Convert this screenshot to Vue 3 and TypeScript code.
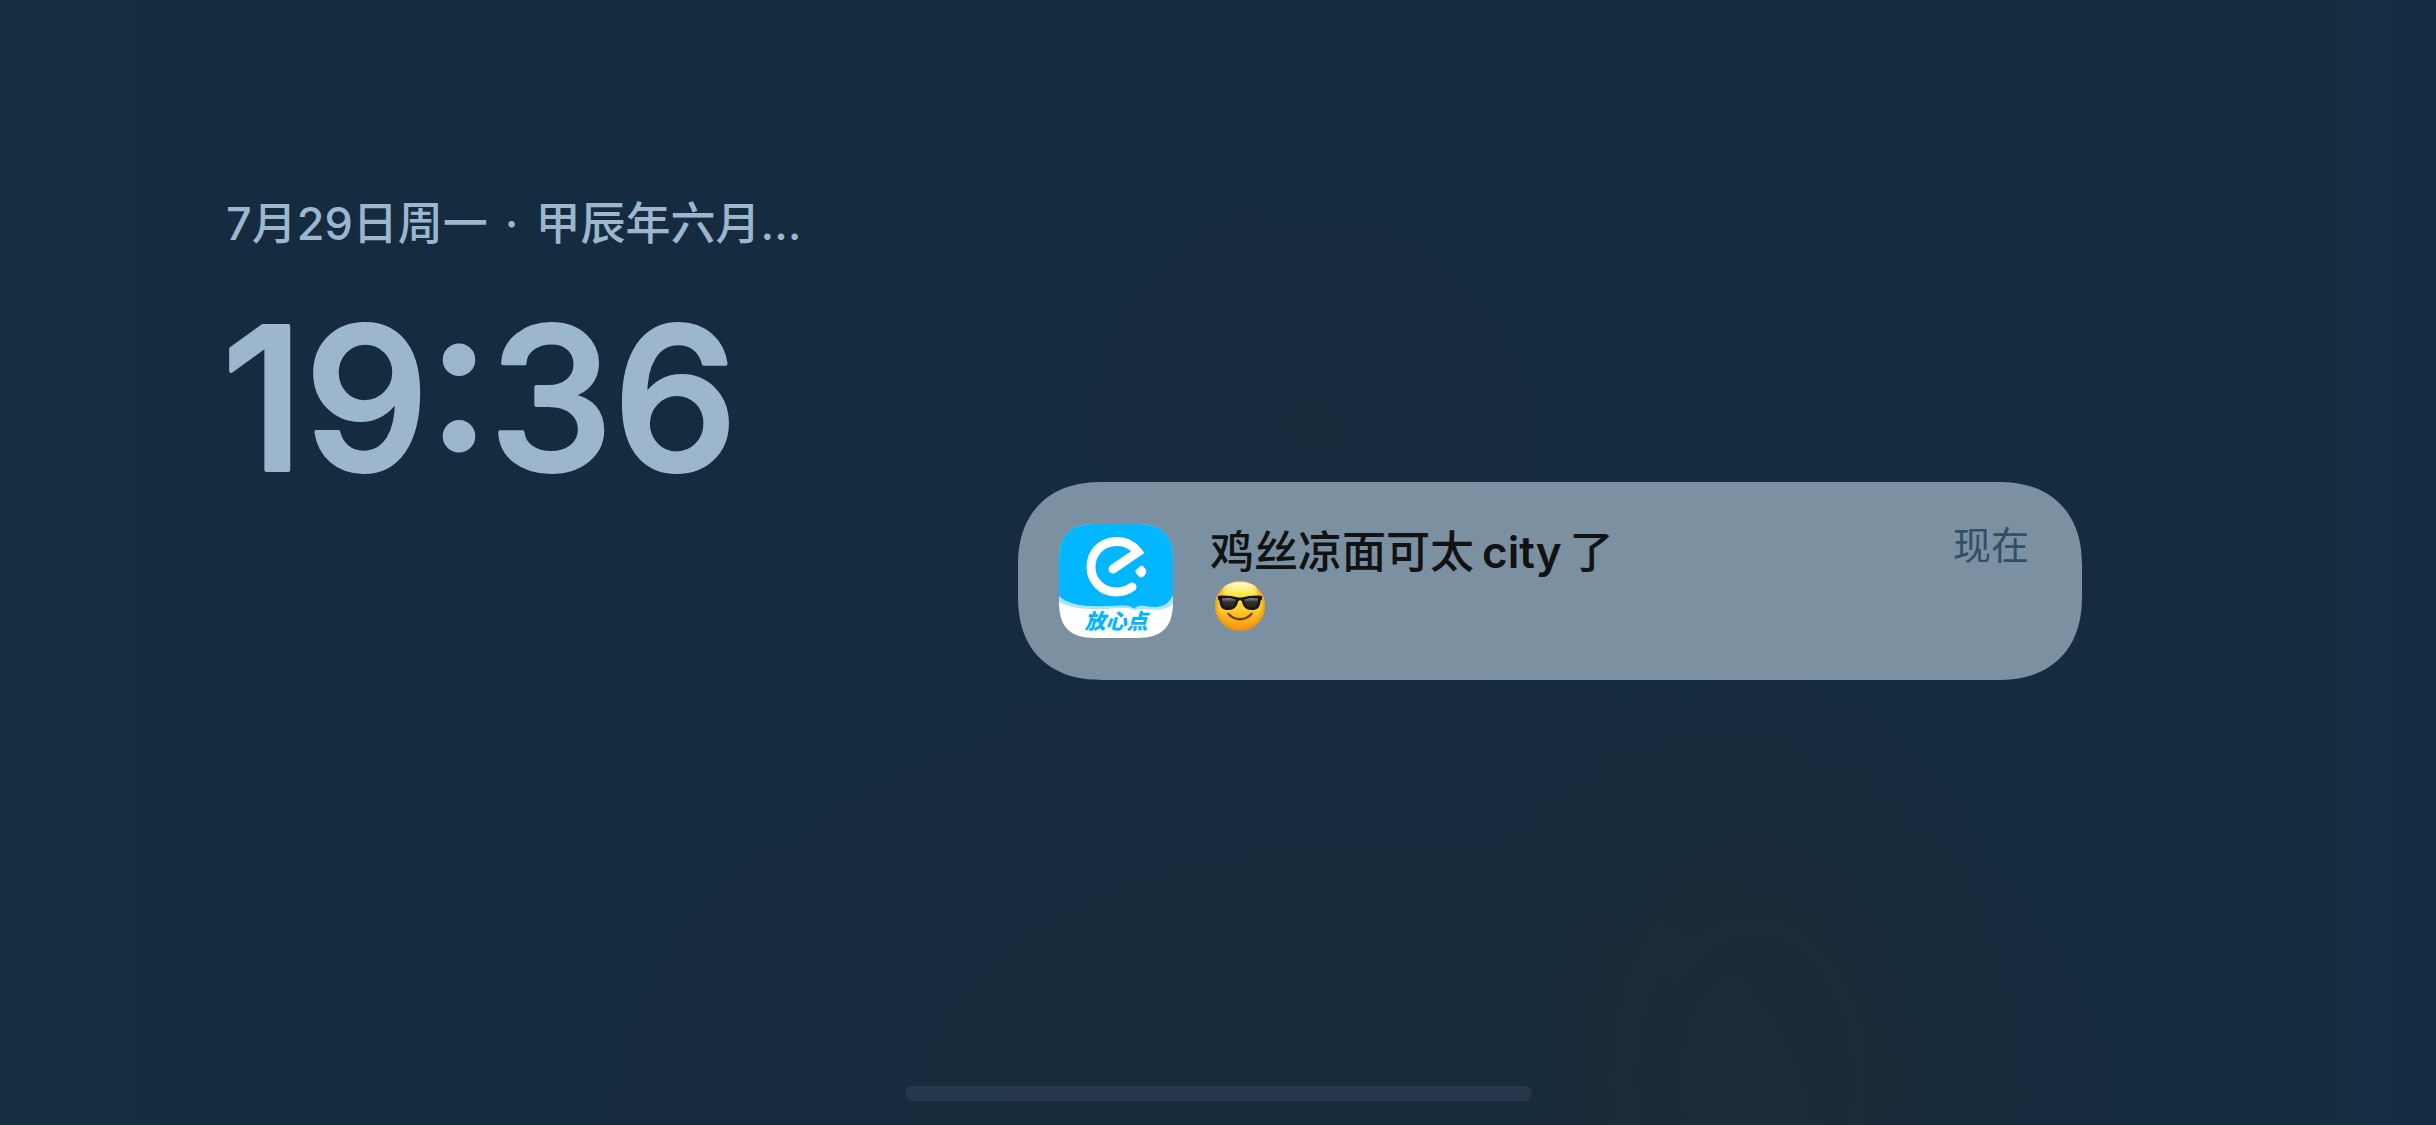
<script setup lang="ts">
interface Notice {
  app: string
  before: string
  latin: string
  after: string
  when: string
}

const solar = '7月29日周一'
const lunar = '甲辰年六月…'
const time = '19:36'
const notice: Notice = {
  app: '放心点',
  before: '鸡丝凉面可太',
  latin: 'city',
  after: '了',
  when: '现在',
}
</script>

<template>
  <main class="lock">
    <div class="content">
      <section class="clock">
        <p class="date">{{ solar }} <span class="dot">·</span> {{ lunar }}</p>
        <svg class="time" viewBox="0 0 520 176" role="img" :aria-label="time">
          <text x="-4" y="158">{{ time }}</text>
        </svg>
      </section>

      <section class="feed">
        <article class="card">
          <svg class="app" viewBox="0 0 114 114" aria-hidden="true">
            <defs>
              <clipPath id="app-mask">
                <path d="M36 0H78C103 0 114 11 114 36V78C114 103 103 114 78 114H36C11 114 0 103 0 78V36C0 11 11 0 36 0Z" />
              </clipPath>
            </defs>
            <g clip-path="url(#app-mask)">
              <rect y="60" width="114" height="54" fill="#fff" />
              <path d="M0 0H114V80C106 87 96 86 84 85C80 85 78 87 75 86C70 83 60 84 48 85C28 86 10 84 0 78Z" fill="#a9e5ff" />
              <path d="M0 0H114V71C110 80 103 83 96 83C90 83 86 81 80 82C76 83 76 85 74 84C69 80 60 82 48 82C26 83 9 81 0 72Z" fill="#02b6ff" />
              <path d="M54 45L79 28C73 20 66 17.500 58 17.500C42 17.500 32 29 32 43C32 57 43 68 57 68C64 68 69 66 73 63" fill="none" stroke="#fff" stroke-width="9" stroke-linecap="round" stroke-linejoin="miter" />
              <path d="M82 42Q84 42 85.500 44Q87.500 47 86.500 49Q85 53 82 53Q80 53 78.500 50.500L76.500 47Z" fill="#fff" stroke="#fff" stroke-width="1" stroke-linejoin="round" />
            </g>
            <text x="57" y="105">{{ notice.app }}</text>
          </svg>
          <h1 class="title">
            {{ notice.before }}<span class="latin">{{ notice.latin }}</span>{{ notice.after }}<br />
            <svg class="emoji" viewBox="0 0 50 50" role="img" aria-label="😎">
              <defs>
                <linearGradient id="face" x1="0" y1="0" x2="0" y2="1">
                  <stop offset="0" stop-color="#fff04a" />
                  <stop offset="0.5" stop-color="#ffd335" />
                  <stop offset="1" stop-color="#f8930f" />
                </linearGradient>
                <radialGradient id="rim">
                  <stop offset="0.780" stop-color="#f09a12" stop-opacity="0" />
                  <stop offset="1" stop-color="#e88a10" stop-opacity="0.800" />
                </radialGradient>
                <linearGradient id="shine" x1="0" y1="0" x2="0" y2="1">
                  <stop offset="0" stop-color="#fffff0" />
                  <stop offset="1" stop-color="#fff25a" stop-opacity="0" />
                </linearGradient>
                <linearGradient id="lens" x1="0" y1="0" x2="0" y2="1">
                  <stop offset="0" stop-color="#8a8a8a" />
                  <stop offset="0.400" stop-color="#303030" />
                  <stop offset="1" stop-color="#202020" />
                </linearGradient>
              </defs>
              <circle cx="25" cy="25" r="25" fill="url(#face)" />
              <circle cx="25" cy="25" r="25" fill="url(#rim)" />
              <ellipse cx="25" cy="9" rx="17" ry="8" fill="url(#shine)" />
              <path d="M3 15C10 14 17 15 23 16.500H27C33 15 40 14 47 15V18L45.500 20C45 27 42 29 37 29C31 29 28 26 27 20.500Q25 18 23 20.500C22 26 19 29 13 29C8 29 5 27 4.500 20L3 18Z" fill="#141414" />
              <path d="M7 17.500C12 16.500 17 17 21 18.500C20 25 18 27 13 27C9 27 7 24 7 17.500Z" fill="url(#lens)" />
              <path d="M43 17.500C38 16.500 33 17 29 18.500C30 25 32 27 37 27C41 27 43 24 43 17.500Z" fill="url(#lens)" />
              <path d="M13.500 33C20 40 30 40 36.500 33" fill="none" stroke="#7a3d0b" stroke-width="2.500" stroke-linecap="round" />
            </svg>
          </h1>
          <time class="when">{{ notice.when }}</time>
        </article>
      </section>
    </div>

    <div class="home"></div>
  </main>
</template>

<style>
body {
  margin: 0;
  background: #152b40;
}
</style>

<style scoped>
.lock {
  box-sizing: border-box;
  min-height: 100vh;
  padding: 196px 0 24px;
  display: flex;
  flex-direction: column;
  justify-content: space-between;
  background:
    radial-gradient(ellipse 300px 440px at 72% 96%, rgba(28, 43, 53, 0.7) 20%, rgba(28, 43, 53, 0) 100%),
    radial-gradient(ellipse 900px 560px at 56% 100%, rgba(23, 43, 59, 0.9) 30%, rgba(23, 43, 59, 0) 100%),
    radial-gradient(ellipse 320px 320px at 54% 38%, rgba(23, 43, 59, 0.7), rgba(23, 43, 59, 0) 100%),
    linear-gradient(90deg, #142d41, #152b40 8%, #152b40 94%, #142c42);
  font-family: Inter, "Noto Sans CJK SC", sans-serif;
}

.content {
  padding: 0 354px 0 226px;
  display: grid;
  grid-template-columns: 99fr 133fr;
}

.clock {
  color: #9bb6cd;
}

.date {
  margin: 0;
  font-size: 45px;
  line-height: 56px;
  font-weight: 500;
  white-space: nowrap;
}

.dot {
  margin: 0 5px;
}

.time {
  display: block;
  width: 520px;
  height: 176px;
  margin-top: 60px;
  overflow: visible;
}

.time text {
  font-size: 198px;
  font-weight: 500;
  fill: currentColor;
  stroke: currentColor;
  stroke-width: 4px;
  stroke-linejoin: round;
}

.feed {
  padding-top: 286px;
}

.card {
  box-sizing: border-box;
  min-height: 198px;
  padding: 42px 53px 42px 41px;
  display: flex;
  align-items: flex-start;
  border-radius: 74px;
  background: #7b90a1;
}

@supports (corner-shape: squircle) {
  .card {
    border-radius: 84px;
    corner-shape: superellipse(1.2);
  }
}

.app {
  flex: none;
  width: 114px;
  height: 114px;
}

.app text {
  font-size: 21px;
  font-weight: 900;
  font-style: italic;
  text-anchor: middle;
  fill: #02b6ff;
}

.title {
  flex: 1;
  margin: 3px 0 0 37px;
  font-size: 44px;
  line-height: 50px;
  font-weight: 500;
  color: #101214;
}

.latin {
  margin: 0 8px;
  font-weight: 600;
}

.emoji {
  width: 50px;
  height: 50px;
  margin-left: 5px;
  vertical-align: middle;
}

.when {
  font-size: 38px;
  line-height: 42px;
  color: #304f69;
}

.home {
  align-self: center;
  width: 627px;
  height: 15px;
  border-radius: 8px;
  background: #26374c;
}
</style>
